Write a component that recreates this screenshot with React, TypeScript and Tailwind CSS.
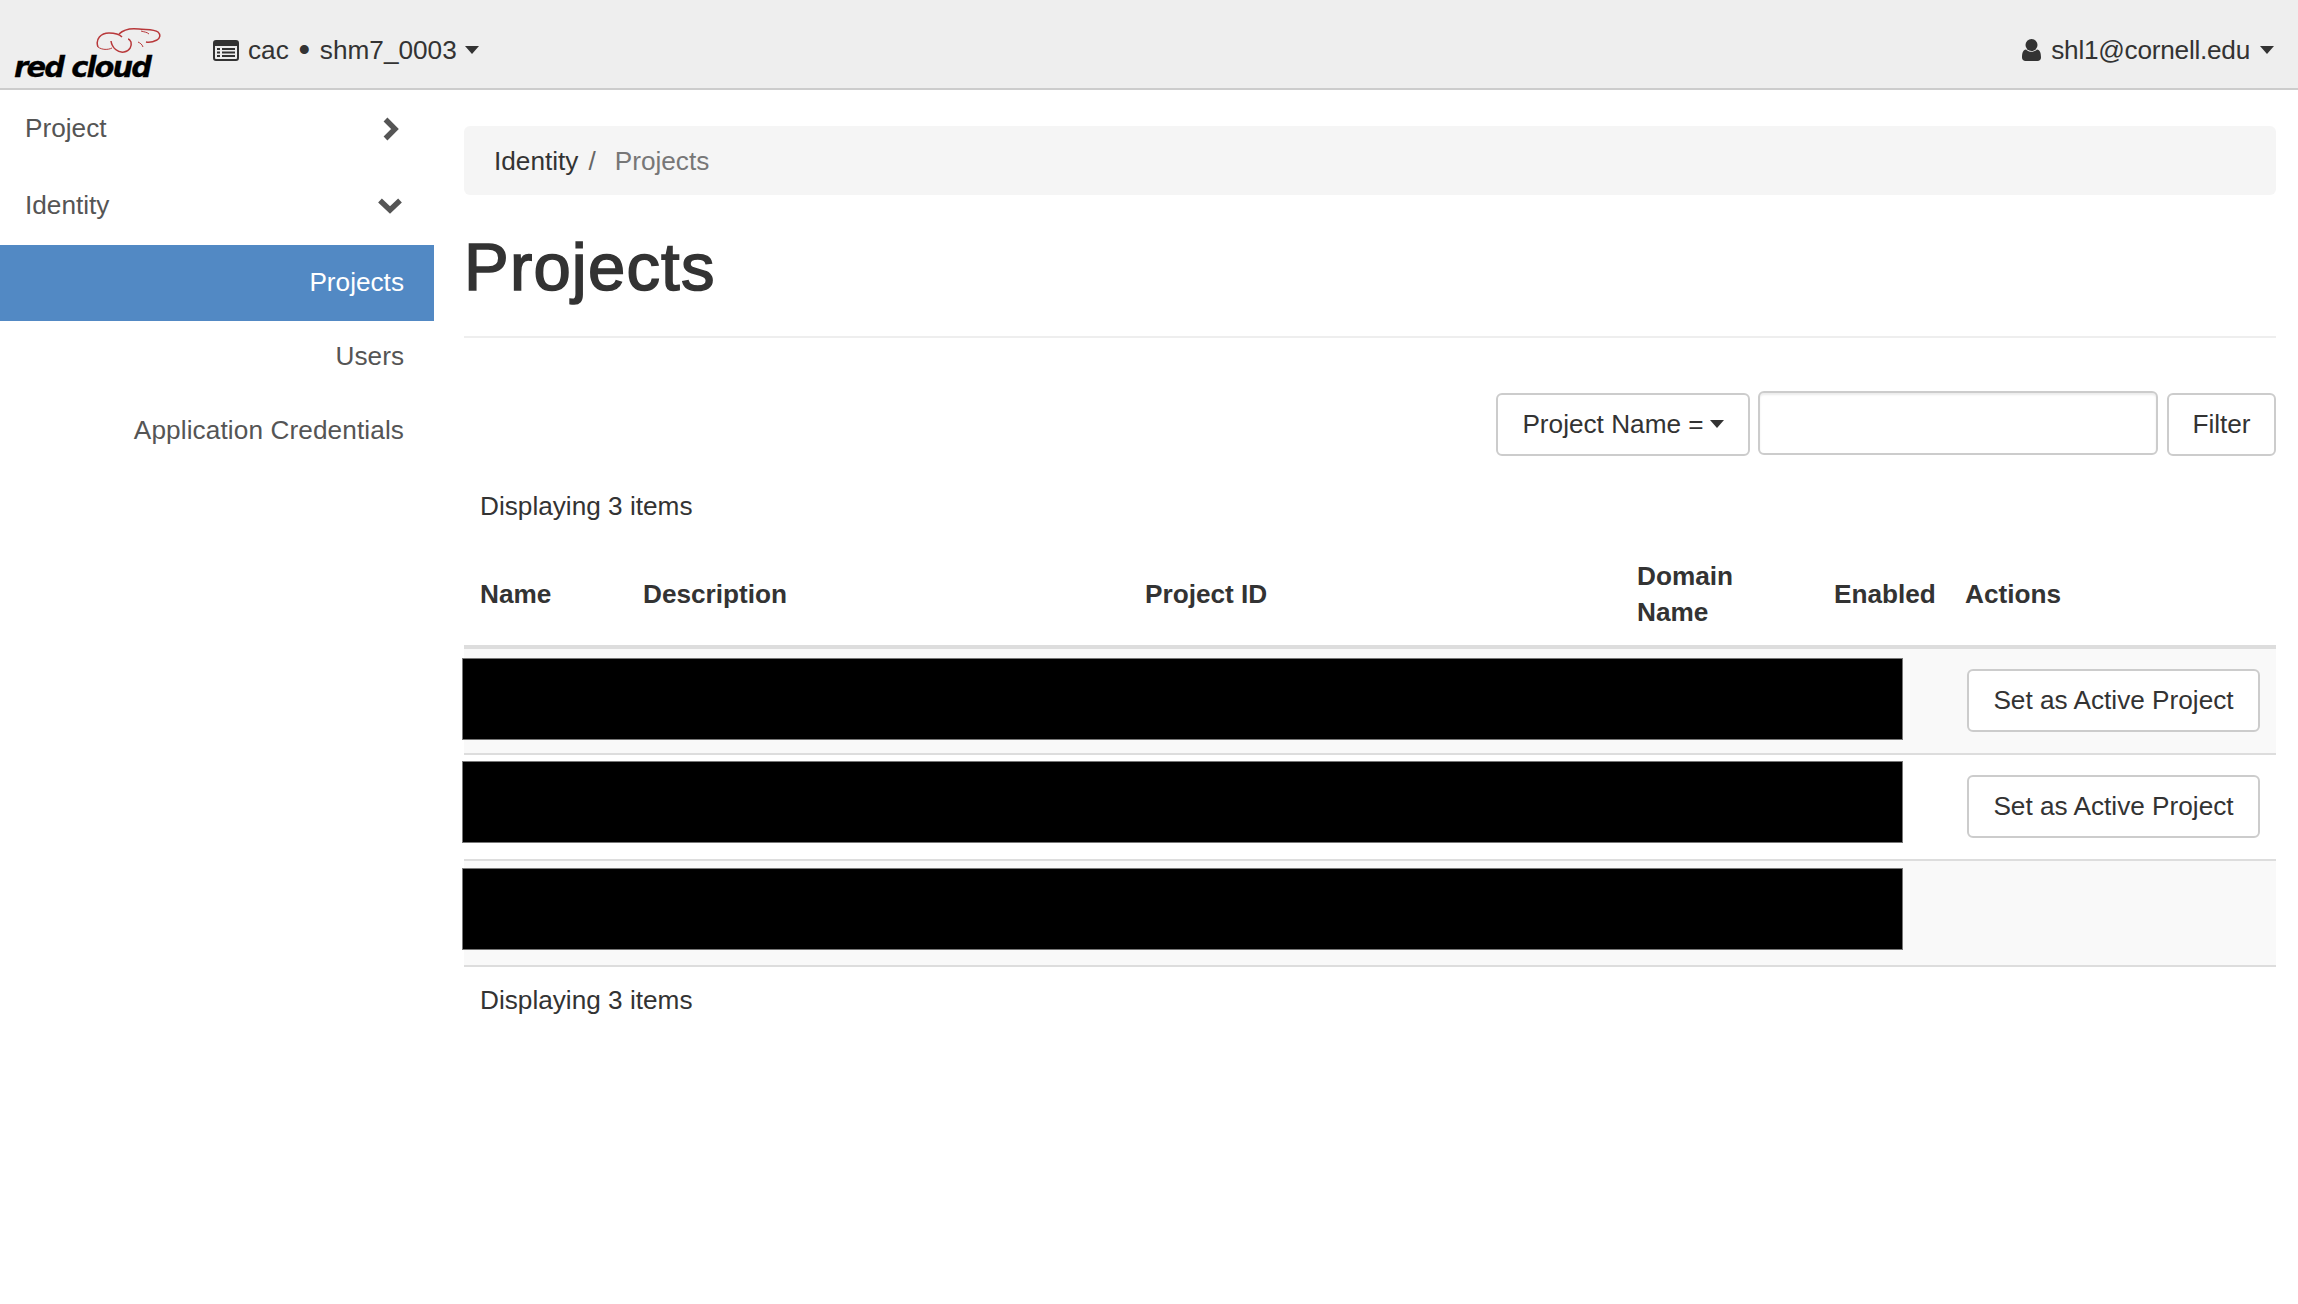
import React from 'react';

const rows = [
  { id: 1, bg: 'bg-[#f9f9f9]', top: 'mt-[9px]', action: true, btn: 'mt-[20px]' },
  { id: 2, bg: 'bg-white', top: 'mt-[6px]', action: true, btn: 'mt-[20px]' },
  { id: 3, bg: 'bg-[#f9f9f9]', top: 'mt-[7px]', action: false, btn: '' },
];

function Caret() {
  return <span className="inline-block w-0 h-0 border-x-[7px] border-x-transparent border-t-[8px] border-t-[#333]" />;
}

function Logo() {
  return (
    <div className="flex flex-col w-[150px] ml-[14px] mt-[27px]">
      <svg width="66" height="27" viewBox="0 0 66 27" fill="none" stroke="#b8383a" strokeWidth="1.5" className="ml-[81px]">
        <path d="M3 20C0 12 6 6 14 6c5 0 10 1 13 4" />
        <path d="M3 20c4 3 10 3 14 1" strokeWidth="1" />
        <path d="M16 14c1 7 7 12 13 11 6-1 8-6 7-10-1-2-2-3-3-3" />
        <path d="M24 7C28 3 36 1 44 2c6 1 15 0 19 3 3 3 2 6-1 8-4 2-7 3-11 2" />
        <path d="M46 4c3 1 6 1 8 3" strokeWidth="1" />
        <path d="M43 15c2 1 4 2 5 5" strokeWidth="1" />
      </svg>
      <span className="font-['DejaVu_Sans'] font-bold italic text-[29px] leading-[28px] -mt-[1px] text-black tracking-[-1.9px] [-webkit-text-stroke:0.3px_#000000] whitespace-nowrap">
        red cloud
      </span>
    </div>
  );
}

function TopBar() {
  return (
    <header className="h-[90px] bg-[#eeeeee] border-b-2 border-[#cccccc] flex justify-between text-[#333333]">
      <div className="flex">
        <Logo />
        <div className="flex items-center ml-[49px] mt-[12px]">
          <svg width="26" height="21" viewBox="0 0 26 21" className="mr-[9px]">
            <path
              fillRule="evenodd"
              fill="#333333"
              d="M3 0h20a3 3 0 0 1 3 3v15a3 3 0 0 1-3 3H3a3 3 0 0 1-3-3V3a3 3 0 0 1 3-3zM2 6v12a1 1 0 0 0 1 1h20a1 1 0 0 0 1-1V6z"
            />
            <path fill="#333333" d="M4 8h3v2H4zM9 8h13v2H9zM4 11.500h3v2H4zM9 11.500h13v2H9zM4 15h3v2H4zM9 15h13v2H9z" />
          </svg>
          <span className="whitespace-pre">
            cac <span className="mx-[2.5px] text-[33px] leading-[0] align-[-2px]">•</span> shm7_0003
          </span>
          <span className="ml-[8px] flex"><Caret /></span>
        </div>
      </div>
      <div className="flex items-center mr-[24px] mt-[12px]">
        <svg width="19" height="22" viewBox="0 0 19 22" fill="#333333" className="mr-[10px]">
          <circle cx="9.500" cy="6" r="6" />
          <path d="M0 18.500C0 14 1 11 4 10.500c1.500 1.500 3.500 2.300 5.500 2.300s4-.8 5.500-2.300c3 .5 4 3.500 4 8 0 2.300-1.500 3.500-3.500 3.500h-12C1.500 22 0 20.800 0 18.500z" />
        </svg>
        <span className="tracking-[-0.25px]">shl1@cornell.edu</span>
        <span className="ml-[10px] flex"><Caret /></span>
      </div>
    </header>
  );
}

function Sidebar() {
  return (
    <nav className="w-[434px] shrink-0 text-[#555555]">
      <div className="h-[77px] flex items-center justify-between pl-[25px] pr-[35px]">
        <span className="-mt-[2px]">Project</span>
        <svg width="16" height="24" viewBox="0 0 16 24" fill="none" stroke="#555555" strokeWidth="5.400">
          <path d="M2.500 2.500 12 12l-9.500 9.500" />
        </svg>
      </div>
      <div className="h-[78px] flex items-center justify-between pl-[25px] pr-[32px]">
        <span className="-mt-[2px]">Identity</span>
        <svg width="24" height="16" viewBox="0 0 24 16" fill="none" stroke="#555555" strokeWidth="5.400">
          <path d="M2 2.500l10 9.500 10-9.500" />
        </svg>
      </div>
      <div className="h-[76px] flex items-center justify-end pr-[30px] pb-[2px] bg-[#5289c4] text-white">Projects</div>
      <div className="h-[74px] flex items-center justify-end pr-[30px] pb-[4px]">Users</div>
      <div className="h-[74px] flex items-center justify-end pr-[30px] pb-[5px] tracking-[0.1px]">Application Credentials</div>
    </nav>
  );
}

function ProjectTable() {
  return (
    <table className="w-full table-fixed border-separate border-spacing-0 mt-[19px]">
      <colgroup>
        <col className="w-[163px]" />
        <col className="w-[502px]" />
        <col className="w-[492px]" />
        <col className="w-[197px]" />
        <col className="w-[130px]" />
        <col />
      </colgroup>
      <thead>
        <tr className="font-bold text-left">
          <th className="h-[106px] p-0 pl-[16px] border-b-4 border-[#dddddd]">Name</th>
          <th className="p-0 pl-[16px] border-b-4 border-[#dddddd]">Description</th>
          <th className="p-0 pl-[16px] border-b-4 border-[#dddddd]">Project ID</th>
          <th className="p-0 pl-[16px] border-b-4 border-[#dddddd]">Domain<br />Name</th>
          <th className="p-0 pl-[16px] border-b-4 border-[#dddddd] whitespace-nowrap">Enabled</th>
          <th className="p-0 pl-[17px] border-b-4 border-[#dddddd]">Actions</th>
        </tr>
      </thead>
      <tbody>
        {rows.map((row) => (
          <tr key={row.id} className={row.bg}>
            <td colSpan={5} className="h-[106px] p-0 align-top border-b-2 border-[#dddddd]">
              <div className={`${row.top} -ml-[2px] w-[1441px] h-[82px] bg-black border border-[#777777]`} />
            </td>
            <td className="p-0 pl-[19px] align-top border-b-2 border-[#dddddd]">
              {row.action && (
                <button className={`${row.btn} h-[63px] w-[293px] pb-[1px] bg-white border-2 border-[#cccccc] rounded-[6px] text-[#333333]`}>
                  Set as Active Project
                </button>
              )}
            </td>
          </tr>
        ))}
      </tbody>
    </table>
  );
}

export default function App() {
  return (
    <div className="min-h-[1304px] bg-white font-['Liberation_Sans',sans-serif] text-[26.2px] leading-[36px] text-[#333333]">
      <TopBar />
      <div className="flex">
        <Sidebar />
        <main className="flex-1 ml-[30px] mr-[22px]">
          <div className="mt-[36px] h-[69px] bg-[#f5f5f5] rounded-[6px] flex items-center pl-[30px]">
            <span>Identity</span>
            <span className="ml-[10px] text-[#666666]">/</span>
            <span className="ml-[19px] text-[#777777]">Projects</span>
          </div>
          <div className="h-[143px] border-b-2 border-[#eeeeee] flex items-start">
            <h1 className="mt-[36px] text-[67px] leading-[72px] tracking-[1.2px] [-webkit-text-stroke:1.6px_#333333]">Projects</h1>
          </div>
          <div className="mt-[55px] flex justify-end items-start">
            <button className="h-[63px] w-[254px] pb-[2px] bg-white border-2 border-[#cccccc] rounded-[6px] flex items-center justify-center gap-[6px]">
              Project Name = <Caret />
            </button>
            <input className="ml-[8px] -mt-[2px] h-[64px] w-[400px] border-2 border-[#cccccc] rounded-[6px] shadow-[inset_0_2px_2px_rgba(0,0,0,0.075)]" />
            <button className="ml-[9px] h-[63px] w-[109px] pb-[2px] bg-white border-2 border-[#cccccc] rounded-[6px]">Filter</button>
          </div>
          <div className="mt-[32px] pl-[16px]">Displaying 3 items</div>
          <ProjectTable />
          <div className="mt-[15px] pl-[16px]">Displaying 3 items</div>
        </main>
      </div>
    </div>
  );
}
